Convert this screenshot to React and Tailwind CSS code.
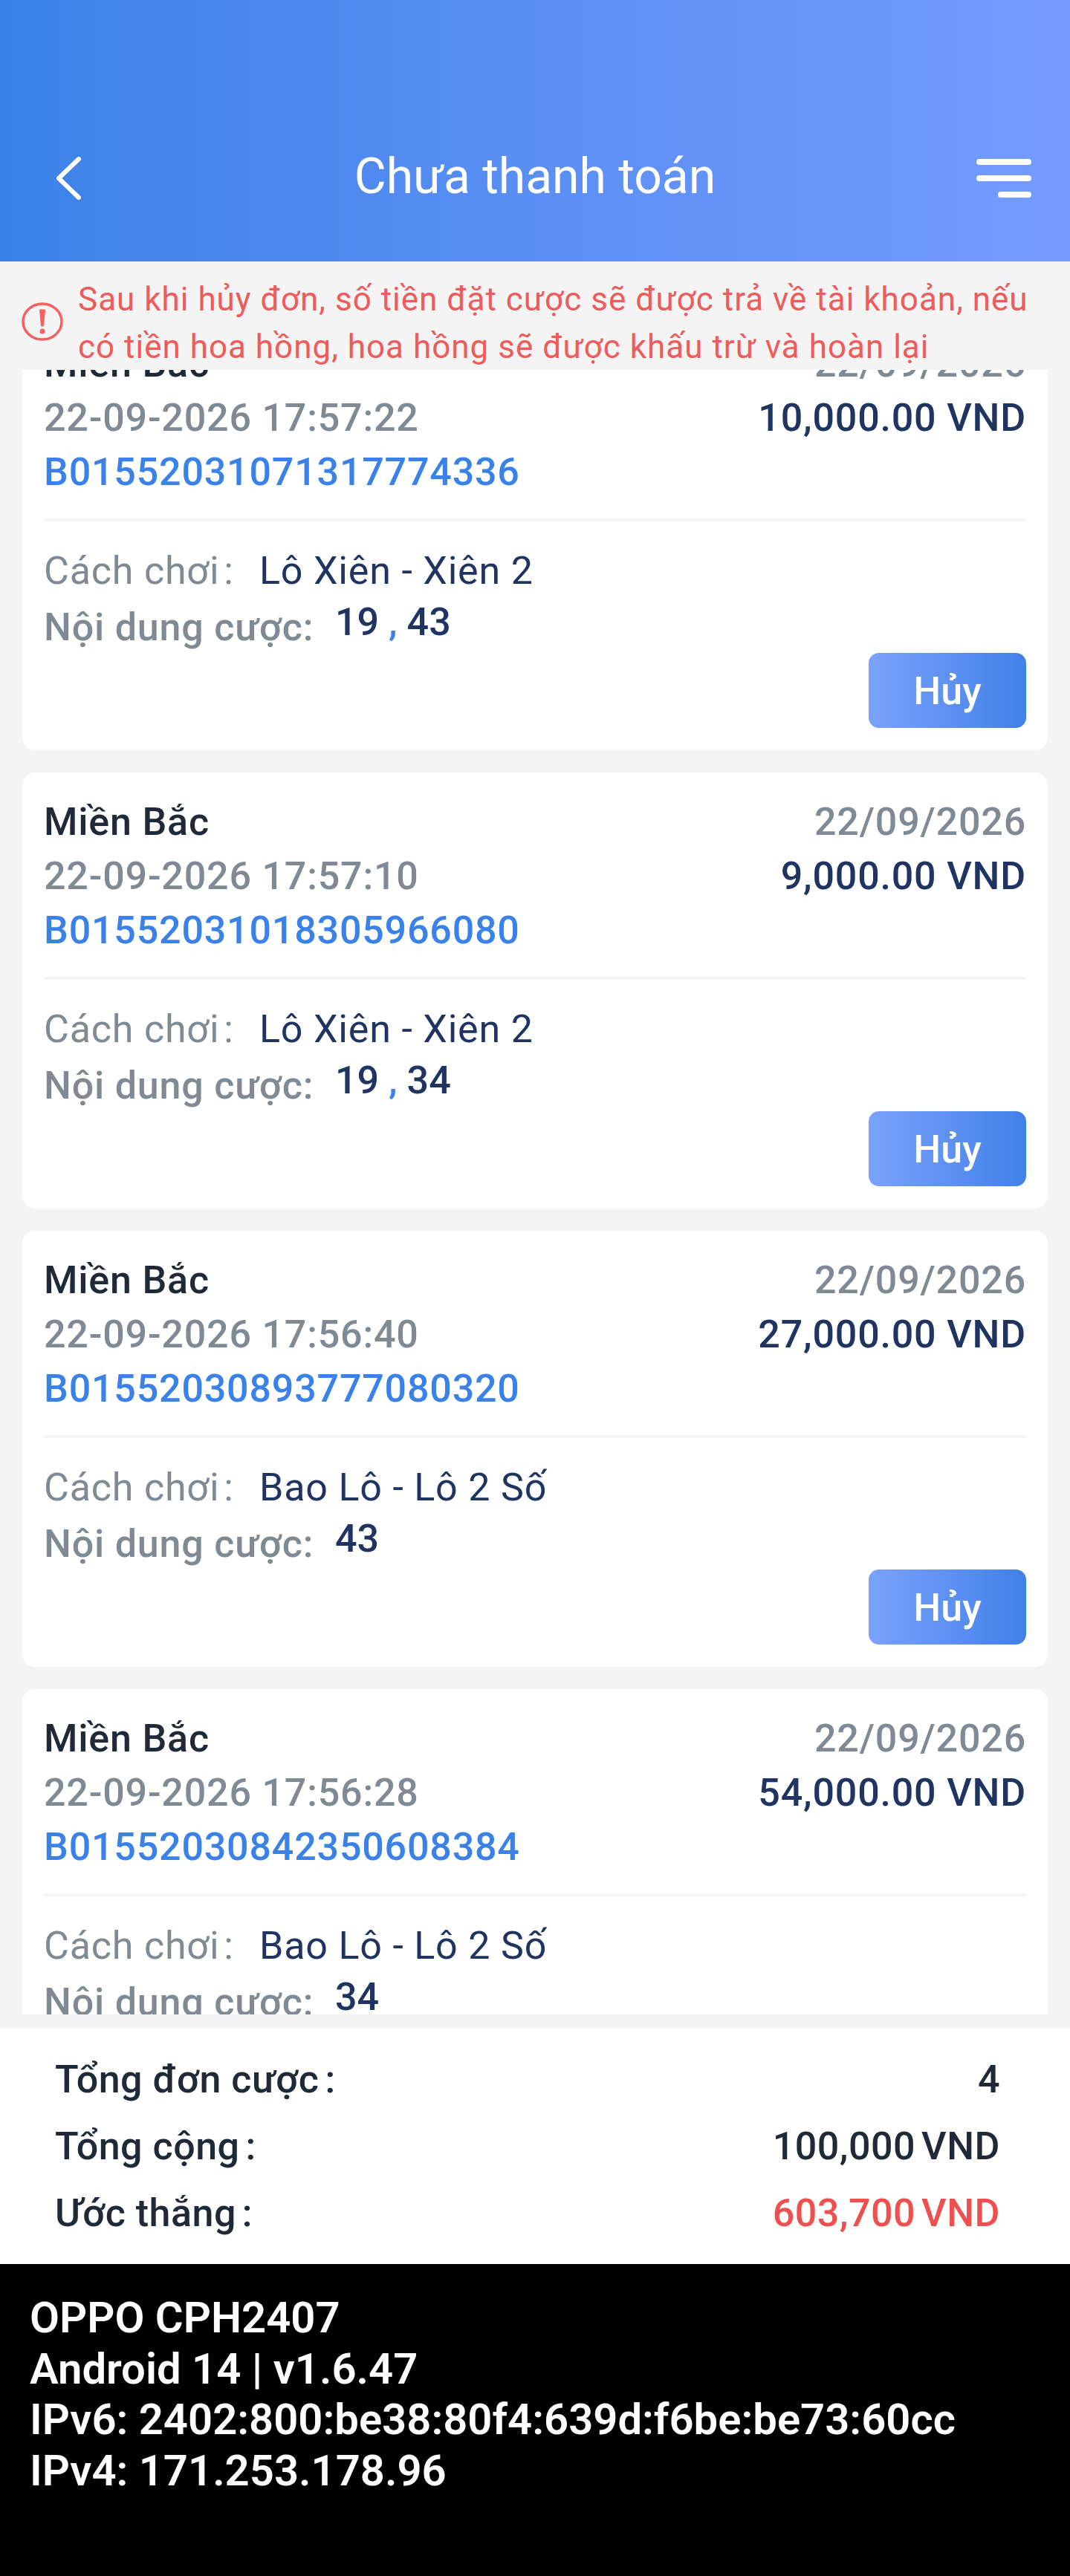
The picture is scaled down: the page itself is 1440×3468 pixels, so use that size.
import React from 'react';

const ORDERS = [
  { time: '22-09-2026 17:57:22', amount: '10,000.00 VND', code: 'B01552031071317774336', play: 'Lô Xiên - Xiên 2', nums: ['19', '43'] },
  { time: '22-09-2026 17:57:10', amount: '9,000.00 VND', code: 'B01552031018305966080', play: 'Lô Xiên - Xiên 2', nums: ['19', '34'] },
  { time: '22-09-2026 17:56:40', amount: '27,000.00 VND', code: 'B01552030893777080320', play: 'Bao Lô - Lô 2 Số', nums: ['43'] },
  { time: '22-09-2026 17:56:28', amount: '54,000.00 VND', code: 'B01552030842350608384', play: 'Bao Lô - Lô 2 Số', nums: ['34'] },
];

const SUMMARY = [
  { label: 'Tổng đơn cược', value: '4', color: 'text-[#1f2937]' },
  { label: 'Tổng cộng', value: '100,000', unit: 'VND', color: 'text-[#1f2937]' },
  { label: 'Ước thắng', value: '603,700', unit: 'VND', color: 'text-[#ee5050]' },
];

function OrderCard({ order }) {
  return (
    <div className="bg-white rounded-[17px] px-[29px] pt-[30px] pb-[30px] h-[587px] shrink-0">
      <div className="flex justify-between items-center h-[73px] text-[52px] font-medium tracking-[0.8px]">
        <span className="text-[#1f2937]">Miền Bắc</span>
        <span className="text-[#808a94]">22/09/2026</span>
      </div>
      <div className="flex justify-between items-center h-[73px] text-[52px] font-medium tracking-[0.8px]">
        <span className="text-[#808a94]">{order.time}</span>
        <span className="text-[#1f3460]">{order.amount}</span>
      </div>
      <div className="flex items-center h-[73px] text-[52px] font-medium tracking-[0.8px] text-[#3b82e8]">{order.code}</div>
      <div className="h-[4px] bg-[#f4f4f4] mt-[26px]" />
      <div className="flex items-center h-[76px] mt-[29px] text-[52px] tracking-[0.8px]">
        <span className="text-[#808a94] w-[290px]">Cách chơi<span className="ml-[6px]">:</span></span>
        <span className="text-[#1f3460]">{order.play}</span>
      </div>
      <div className="flex items-center h-[76px] text-[52px] tracking-[0.8px]">
        <span className="text-[#808a94] font-medium w-[392px]">Nội dung cược:</span>
        <span className="text-[#1f3460] font-medium -mt-[15px] tracking-normal">
          {order.nums.map((n, i) => (
            <React.Fragment key={n}>
              {i > 0 && <span className="text-[#3b82e8]"> , </span>}
              {n}
            </React.Fragment>
          ))}
        </span>
      </div>
      <div className="flex justify-end -mt-[4px]">
        <button className="w-[212px] h-[101px] rounded-[14px] pt-[3px] bg-gradient-to-r from-[#7aa2fc] to-[#4080e8] text-white text-[52px] font-medium">Hủy</button>
      </div>
    </div>
  );
}

export default function App() {
  return (
    <div className="w-[1440px] h-[3468px] flex flex-col bg-[#f4f4f4] overflow-hidden font-['Roboto',sans-serif]">
      {/* Header */}
      <div className="h-[352px] shrink-0 bg-gradient-to-r from-[#3b82e8] to-[#769bff] flex items-end justify-between pl-[76px] pr-[52px] pb-[82px] relative">
        <svg width="33" height="58" viewBox="0 0 33 58" fill="none" className="mb-[1px]">
          <path d="M30 3 L3 29 L30 55" stroke="white" strokeWidth="6" strokeLinecap="round" strokeLinejoin="round" />
        </svg>
        <div className="text-white text-[66px] leading-[66px] absolute left-0 right-0 bottom-[81px] text-center">Chưa thanh toán</div>
        <div className="flex flex-col items-end gap-[14px] w-[74px] mb-[4px]">
          <div className="w-full h-[8px] bg-white rounded-full" />
          <div className="w-full h-[8px] bg-white rounded-full" />
          <div className="w-[45px] h-[8px] bg-white rounded-full" />
        </div>
      </div>

      {/* Notice */}
      <div className="h-[146px] shrink-0 flex items-start pl-[29px] pr-[20px] z-10 bg-[#f4f4f4]">
        <svg width="56" height="52" viewBox="0 0 56 52" fill="none" className="shrink-0 mt-[55px]">
          <ellipse cx="28" cy="26" rx="26" ry="24" stroke="#f66060" strokeWidth="3.5" />
          <path d="M24.5 10 H31.5 L29.5 32 H26.5 Z" fill="#f66060" stroke="#f66060" strokeWidth="1" strokeLinejoin="round" />
          <circle cx="28" cy="39" r="3.5" fill="#f66060" />
        </svg>
        <div className="ml-[20px] mt-[19px] text-[44px] leading-[64px] text-[#ee5b5b] tracking-[1px]">
          Sau khi hủy đơn, số tiền đặt cược sẽ được trả về tài khoản, nếu có tiền hoa hồng, hoa hồng sẽ được khấu trừ và hoàn lại
        </div>
      </div>

      {/* Orders */}
      <div className="h-[2214px] shrink-0 overflow-hidden px-[30px]">
        <div className="-mt-[75px] flex flex-col gap-[30px]">
          {ORDERS.map((o) => (
            <OrderCard key={o.code} order={o} />
          ))}
        </div>
      </div>

      <div className="h-[19px] shrink-0" />

      {/* Summary */}
      <div className="h-[317px] shrink-0 bg-white pl-[74px] pr-[94px] pt-[24px] flex flex-col text-[52px] font-medium tracking-[0.5px]">
        {SUMMARY.map((row) => (
          <div key={row.label} className="flex justify-between items-center h-[90px]">
            <span className="text-[#1f2937]">{row.label}<span className="ml-[8px]">:</span></span>
            <span className={row.color}>
              {row.value}
              {row.unit && <span className="ml-[8px]">{row.unit}</span>}
            </span>
          </div>
        ))}
      </div>

      {/* Device info */}
      <div className="flex-1 bg-black text-white text-[58px] leading-[68.5px] font-semibold pl-[40px] pt-[38px]">
        <div>OPPO CPH2407</div>
        <div>Android 14 | v1.6.47</div>
        <div>IPv6: 2402:800:be38:80f4:639d:f6be:be73:60cc</div>
        <div>IPv4: 171.253.178.96</div>
      </div>
    </div>
  );
}
